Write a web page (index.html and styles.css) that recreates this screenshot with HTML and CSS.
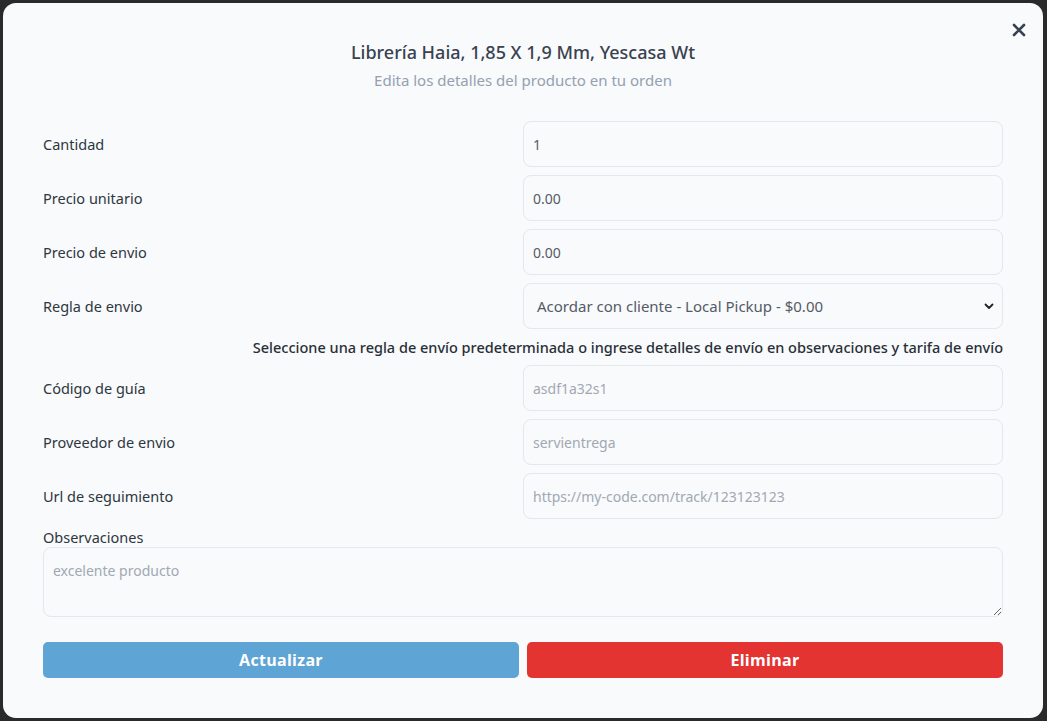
FILE: index.html
```html
<!DOCTYPE html>
<html lang="es">
<head>
<meta charset="utf-8">
<title>Editar producto</title>
<link rel="stylesheet" href="styles.css">
</head>
<body>
<div class="modal">
  <button class="close" aria-label="Cerrar">
    <svg width="14" height="14" viewBox="0 0 14 14"><path d="M2 2 L12 12 M12 2 L2 12" stroke="#374151" stroke-width="2.6" stroke-linecap="round"/></svg>
  </button>
  <header class="head">
    <h1 class="title">Librería Haia, 1,85 X 1,9 Mm, Yescasa Wt</h1>
    <p class="subtitle">Edita los detalles del producto en tu orden</p>
  </header>
  <form class="form">
    <div class="row"><label class="label">Cantidad</label><input class="field" value="1"></div>
    <div class="row"><label class="label">Precio unitario</label><input class="field" value="0.00"></div>
    <div class="row"><label class="label">Precio de envio</label><input class="field" value="0.00"></div>
    <div class="row"><label class="label">Regla de envio</label>
      <div class="select">
        <span>Acordar con cliente - Local Pickup - $0.00</span>
        <svg width="10" height="7" viewBox="0 0 10 7"><path d="M1.5 1.5 L5 5 L8.5 1.5" fill="none" stroke="#222" stroke-width="1.8" stroke-linecap="round" stroke-linejoin="round"/></svg>
      </div>
    </div>
    <p class="help">Seleccione una regla de envío predeterminada o ingrese detalles de envío en observaciones y tarifa de envío</p>
    <div class="row"><label class="label">Código de guía</label><input class="field" placeholder="asdf1a32s1"></div>
    <div class="row"><label class="label">Proveedor de envio</label><input class="field" placeholder="servientrega"></div>
    <div class="row"><label class="label">Url de seguimiento</label><input class="field" placeholder="https://my-code.com/track/123123123"></div>
    <div class="obs">
      <label class="label">Observaciones</label>
      <textarea class="area" placeholder="excelente producto"></textarea>
    </div>
    <div class="actions">
      <button type="button" class="btn btn-update">Actualizar</button>
      <button type="button" class="btn btn-delete">Eliminar</button>
    </div>
  </form>
</div>
</body>
</html>
```
FILE: styles.css
```css
* { box-sizing: border-box; }
html, body { margin: 0; padding: 0; }
body {
  background: #2a2a2a;
  padding: 3px 4px 3px 3px;
  font-family: "Noto Sans", "Open Sans", sans-serif;
  height: 721px;
  overflow: hidden;
}
.modal {
  position: relative;
  width: 1040px;
  height: 715px;
  background: #f8fafc;
  border-radius: 13px;
  padding: 33px 40px 0 40px;
}
.close {
  position: absolute;
  top: 19px;
  right: 16px;
  background: none;
  border: 0;
  padding: 0;
  width: 16px;
  height: 16px;
  display: flex;
  align-items: center;
  justify-content: center;
}
.head { text-align: center; }
.title {
  margin: 0;
  font-size: 18px;
  font-weight: 500;
  color: #3a4250;
  line-height: 32px;
}
.subtitle {
  margin: 0;
  font-size: 15px;
  color: #95a0b0;
  line-height: 24px;
}
.form {
  margin-top: 29px;
  display: flex;
  flex-direction: column;
  gap: 8px;
}
.row {
  display: grid;
  grid-template-columns: 480px 480px;
  align-items: center;
}
.label {
  font-size: 14.5px;
  font-weight: 400;
  color: #2f3640;
}
.field, .select, .area {
  height: 46px;
  border: 1px solid #e4e7ec;
  border-radius: 8px;
  background: #f8fafc;
  font-family: inherit;
  font-size: 14px;
  color: #555b66;
  padding: 0 9px;
  outline: none;
}
.field::placeholder, .area::placeholder { color: #a2a8b3; }
.select {
  display: flex;
  align-items: center;
  justify-content: space-between;
  padding: 0 8px 0 13px;
  font-size: 15px;
  color: #555b66;
}
.help {
  margin: 0;
  text-align: right;
  font-size: 14.5px;
  font-weight: 500;
  line-height: 20px;
  color: #2a2f36;
}
.obs {
  display: flex;
  flex-direction: column;
}
.obs .label { line-height: 20px; }
.area {
  height: 70px;
  resize: vertical;
  padding: 13px 9px;
  width: 960px;
}
.actions {
  margin-top: 17px;
  display: grid;
  grid-template-columns: 1fr 1fr;
  gap: 8px;
}
.btn {
  height: 36px;
  border: 0;
  border-radius: 5px;
  color: #fff;
  font-family: "Open Sans", sans-serif;
  font-weight: 700;
  font-size: 16px;
  letter-spacing: 0.3px;
}
.btn-update { background: #5ea4d4; }
.btn-delete { background: #e33432; }
```
